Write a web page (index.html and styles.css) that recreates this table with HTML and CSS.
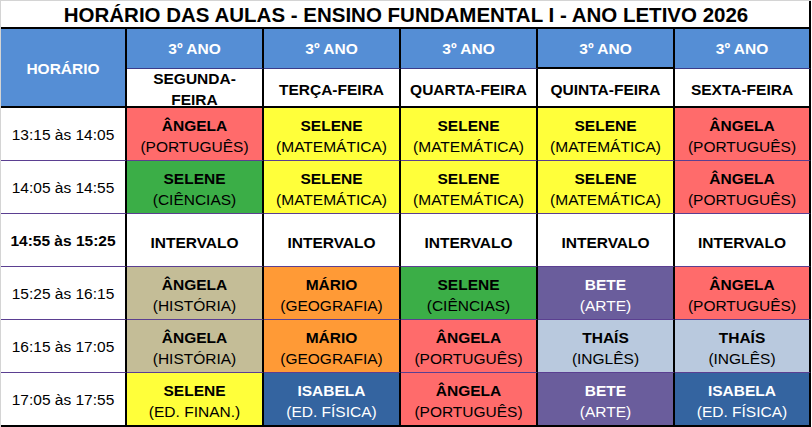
FILE: index.html
```html
<!DOCTYPE html>
<html lang="pt-BR">
<head>
<meta charset="utf-8">
<title>Horário das Aulas</title>
<link rel="stylesheet" href="styles.css">
</head>
<body>
<div class="sheet">
  <div class="title">HORÁRIO DAS AULAS - ENSINO FUNDAMENTAL I - ANO LETIVO 2026</div>
  <div class="grid">
    <div class="cell corner">HORÁRIO</div>
    <div class="cell year">3º ANO</div>
    <div class="cell year">3º ANO</div>
    <div class="cell year">3º ANO</div>
    <div class="cell year year-strong">3º ANO</div>
    <div class="cell year">3º ANO</div>

    <div class="cell day">SEGUNDA-<br>FEIRA</div>
    <div class="cell day">TERÇA-FEIRA</div>
    <div class="cell day">QUARTA-FEIRA</div>
    <div class="cell day">QUINTA-FEIRA</div>
    <div class="cell day">SEXTA-FEIRA</div>

    <div class="cell time">13:15 às 14:05</div>
    <div class="cell cls red"><b>ÂNGELA</b><span>(PORTUGUÊS)</span></div>
    <div class="cell cls yellow"><b>SELENE</b><span>(MATEMÁTICA)</span></div>
    <div class="cell cls yellow"><b>SELENE</b><span>(MATEMÁTICA)</span></div>
    <div class="cell cls yellow"><b>SELENE</b><span>(MATEMÁTICA)</span></div>
    <div class="cell cls red"><b>ÂNGELA</b><span>(PORTUGUÊS)</span></div>

    <div class="cell time">14:05 às 14:55</div>
    <div class="cell cls green"><b>SELENE</b><span>(CIÊNCIAS)</span></div>
    <div class="cell cls yellow"><b>SELENE</b><span>(MATEMÁTICA)</span></div>
    <div class="cell cls yellow"><b>SELENE</b><span>(MATEMÁTICA)</span></div>
    <div class="cell cls yellow"><b>SELENE</b><span>(MATEMÁTICA)</span></div>
    <div class="cell cls red"><b>ÂNGELA</b><span>(PORTUGUÊS)</span></div>

    <div class="cell time bold">14:55 às 15:25</div>
    <div class="cell cls"><b>INTERVALO</b></div>
    <div class="cell cls"><b>INTERVALO</b></div>
    <div class="cell cls"><b>INTERVALO</b></div>
    <div class="cell cls"><b>INTERVALO</b></div>
    <div class="cell cls"><b>INTERVALO</b></div>

    <div class="cell time">15:25 às 16:15</div>
    <div class="cell cls tan"><b>ÂNGELA</b><span>(HISTÓRIA)</span></div>
    <div class="cell cls orange"><b>MÁRIO</b><span>(GEOGRAFIA)</span></div>
    <div class="cell cls green"><b>SELENE</b><span>(CIÊNCIAS)</span></div>
    <div class="cell cls purple"><b>BETE</b><span>(ARTE)</span></div>
    <div class="cell cls red"><b>ÂNGELA</b><span>(PORTUGUÊS)</span></div>

    <div class="cell time">16:15 às 17:05</div>
    <div class="cell cls tan"><b>ÂNGELA</b><span>(HISTÓRIA)</span></div>
    <div class="cell cls orange"><b>MÁRIO</b><span>(GEOGRAFIA)</span></div>
    <div class="cell cls red"><b>ÂNGELA</b><span>(PORTUGUÊS)</span></div>
    <div class="cell cls light"><b>THAÍS</b><span>(INGLÊS)</span></div>
    <div class="cell cls light"><b>THAÍS</b><span>(INGLÊS)</span></div>

    <div class="cell time last">17:05 às 17:55</div>
    <div class="cell cls yellow last"><b>SELENE</b><span>(ED. FINAN.)</span></div>
    <div class="cell cls navy last"><b>ISABELA</b><span>(ED. FÍSICA)</span></div>
    <div class="cell cls red last"><b>ÂNGELA</b><span>(PORTUGUÊS)</span></div>
    <div class="cell cls purple last"><b>BETE</b><span>(ARTE)</span></div>
    <div class="cell cls navy last"><b>ISABELA</b><span>(ED. FÍSICA)</span></div>
  </div>
</div>
</body>
</html>
```
FILE: styles.css
```css
* { box-sizing: border-box; }
html, body { margin: 0; padding: 0; background: #ffffff; }
body {
  font-family: "Liberation Sans", Arial, sans-serif;
  color: #000;
  width: 812px;
  height: 427px;
  overflow: hidden;
}
.sheet {
  width: 811px;
  border-left: 1px solid #d4d4d4;
  border-top: 1px solid #d4d4d4;
}
.title {
  height: 28px;
  border-bottom: 2px solid #000;
  border-right: 2px solid #000;
  display: flex;
  align-items: center;
  justify-content: center;
  font-weight: bold;
  font-size: 20.5px;
  padding-left: 2px;
  padding-top: 1px;
  white-space: nowrap;
}
.grid {
  display: grid;
  grid-template-columns: 126px 137px 137px 137px 137px 136px;
  grid-template-rows: 40px 39px 53px 53px 53px 53px 53px 54px;
}
.cell {
  border-right: 2px solid #000;
  border-bottom: 1px solid #5b3f91;
  display: flex;
  flex-direction: column;
  align-items: center;
  justify-content: center;
  text-align: center;
  font-size: 15.5px;
  line-height: 21px;
  white-space: nowrap;
}
.corner {
  grid-row: 1 / span 2;
  background: #558ed5;
  color: #fff;
  font-weight: bold;
  border-bottom: 2px solid #000;
  padding-top: 1px;
}
.year {
  background: #558ed5;
  color: #fff;
  font-weight: bold;
  border-bottom: 1px solid #3b3b8a;
}
.year-strong { border-bottom: 2px solid #000; }
.day {
  font-weight: bold;
  border-bottom: 2px solid #000;
  padding-top: 3px;
}
.time { padding-top: 0; }
.bold { font-weight: bold; }
.cls { padding-top: 4px; }
.cls b { font-weight: bold; }
.cls span { font-weight: normal; }
.last { border-bottom: 2px solid #000; }
.red { background: #ff6b6b; }
.yellow { background: #ffff3a; }
.green { background: #3bae47; }
.tan { background: #c4bd97; }
.orange { background: #ff9a36; }
.purple { background: #6a5d9c; color: #fff; }
.light { background: #b9c9de; }
.navy { background: #3464a0; color: #fff; }
```
